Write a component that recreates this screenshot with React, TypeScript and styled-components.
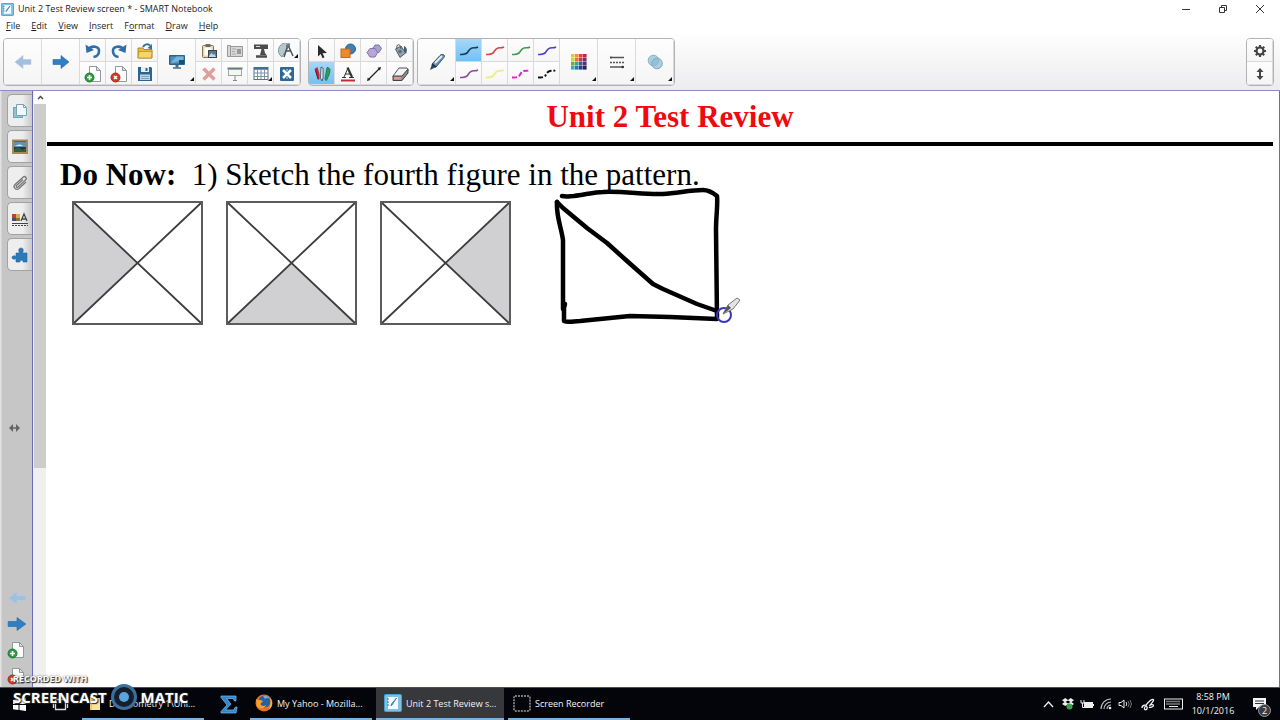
import React from "react";
import styled, { createGlobalStyle } from "styled-components";

const GlobalStyle = createGlobalStyle`
  * { box-sizing: border-box; }
  body {
    margin: 0;
    background: #fff;
    font-family: "Open Sans", "Noto Sans", sans-serif;
    font-size: 9px;
    color: #222;
  }
  button {
    font: inherit;
    color: inherit;
    padding: 0;
    margin: 0;
    border: 0;
    background: none;
  }
  svg { display: block; flex: none; }
`;

const Screen = styled.div`
  display: flex;
  flex-direction: column;
  height: 100vh;
  overflow: hidden;
  position: relative;
`;

/* ---------- Title bar and menu ---------- */

const TitleBar = styled.header`
  display: flex;
  align-items: center;
  height: 18px;
  padding-left: 1px;
  gap: 4px;
`;

const WindowTitle = styled.h1`
  flex: 1;
  margin: 0;
  font-size: 9px;
  line-height: 18px;
  font-weight: 400;
  white-space: nowrap;
`;

const WindowButton = styled.button`
  display: flex;
  align-items: center;
  justify-content: center;
  width: 37px;
  height: 16px;
`;

const WindowButtons = styled.div`
  display: flex;
  padding-right: 2px;
`;

const MenuBar = styled.nav`
  display: flex;
  gap: 11px;
  height: 16px;
  padding-left: 6px;
`;

const MenuButton = styled.button`
  line-height: 16px;
`;

/* ---------- Toolbar ---------- */

const Toolbar = styled.div`
  display: flex;
  align-items: flex-start;
  height: 57px;
  padding: 4px 6px 0 3px;
  background: linear-gradient(#fefefe, #ececee);
  border-bottom: 1px solid #8f8bc6;
`;

const ToolGroup = styled.div<{ $gap?: number }>`
  display: grid;
  grid-auto-flow: column;
  grid-template-rows: 23px 23px;
  height: 48px;
  margin-right: ${(p) => p.$gap ?? 0}px;
  border: 1px solid #b2b2b4;
  border-radius: 4px;
  overflow: hidden;
  background: #fafafb;
`;

const Spacer = styled.div`
  flex: 1;
`;

const ToolButton = styled.button<{ $big?: boolean; $active?: boolean }>`
  display: flex;
  align-items: center;
  justify-content: center;
  position: relative;
  width: ${(p) => (p.$big ? 38 : 26)}px;
  grid-row: ${(p) => (p.$big ? "span 2" : "auto")};
  background: ${(p) =>
    p.$active ? "linear-gradient(#a5d8f9, #6fc0f2)" : "linear-gradient(#fdfdfd, #f5f5f6)"};
  box-shadow: inset -1px -1px 0 #dadadc;
`;

const Corner = styled.span`
  position: absolute;
  right: 2px;
  bottom: 4px;
  border-left: 4px solid transparent;
  border-bottom: 4px solid #111;
`;

/* ---------- Work area ---------- */

const Main = styled.div`
  display: flex;
  flex: 1;
  min-height: 0;
`;

const Sidebar = styled.aside`
  display: flex;
  flex-direction: column;
  width: 33px;
  padding: 3px 0 0 7px;
  background: linear-gradient(90deg, #e2e2e2 1px, #c6c6c6 2px);
  border-right: 1px solid #6f6ab8;
`;

const TabList = styled.div`
  display: flex;
  flex-direction: column;
  gap: 3px;
`;

const SideTab = styled.button`
  display: flex;
  align-items: center;
  justify-content: center;
  height: 33px;
  width: 25px;
  border: 1px solid #a2a2a2;
  border-right: 0;
  border-radius: 5px 0 0 5px;
  background: linear-gradient(90deg, #eeeeee 60%, #c9c9c9);
`;

const SideMiddle = styled.div`
  flex: 1;
  display: flex;
  align-items: center;
  padding: 0 0 4px 1px;
`;

const SideActions = styled.div`
  display: flex;
  flex-direction: column;
  gap: 8px;
  height: 98px;
  overflow: hidden;
`;

const SideButton = styled.button`
  height: 18px;
  width: 20px;
  flex: none;
`;

const ScrollBar = styled.div`
  display: flex;
  flex-direction: column;
  width: 13px;
  padding-left: 1px;
  background: #f0f0f1;
`;

const ScrollUp = styled.button`
  display: flex;
  align-items: center;
  justify-content: center;
  height: 13px;
  background: #fff;
`;

const ScrollThumb = styled.div`
  height: 61%;
  background: #cdcdcd;
`;

const Canvas = styled.main`
  flex: 1;
  background: #fff;
  border-right: 1px solid #6f6ab8;
  font-family: "Liberation Serif", serif;
  color: #000;
`;

const PageHeading = styled.h2`
  margin: 0 6px 0 1px;
  padding: 8px 0 7px 20px;
  border-bottom: 4px solid #000;
  font-size: 31px;
  line-height: 36px;
  font-weight: 700;
  text-align: center;
  color: #f00a10;
`;

const Prompt = styled.p`
  margin: 0;
  padding: 11px 0 0 14px;
  font-size: 31px;
  line-height: 36px;
  white-space: pre-wrap;
`;

const Figures = styled.div`
  display: flex;
  gap: 23px;
  padding: 8px 0 0 26px;
`;

const SketchArea = styled.svg`
  margin-left: 21px;
  overflow: visible;
`;

/* ---------- Taskbar ---------- */

const Taskbar = styled.footer`
  display: flex;
  align-items: stretch;
  height: 33px;
  padding-right: 2px;
  background: #04050a;
  border-top: 1px solid #4e4a7c;
  color: #f2f2f2;
`;

const TaskIconButton = styled.button<{ $width: number }>`
  display: flex;
  align-items: center;
  justify-content: center;
  width: ${(p) => p.$width}px;
`;

const Task = styled.button<{ $active?: boolean; $width: number }>`
  display: flex;
  align-items: center;
  gap: 4px;
  width: ${(p) => p.$width}px;
  margin-right: 4px;
  padding-left: ${(p) => (p.$active ? 8 : 5)}px;
  background: ${(p) => (p.$active ? "#36383c" : "none")};
  border-bottom: 2px solid #76b3e4;
  white-space: nowrap;
`;

const Tray = styled.div`
  display: flex;
  align-items: center;
  margin-left: auto;
`;

const TrayButton = styled.button<{ $width: number }>`
  display: flex;
  align-items: center;
  justify-content: center;
  width: ${(p) => p.$width}px;
  height: 32px;
`;

const Clock = styled.time`
  width: 54px;
  text-align: center;
  line-height: 14px;
`;

const Notifications = styled.button`
  position: relative;
  display: flex;
  align-items: center;
  width: 38px;
  height: 32px;
  padding-left: 13px;
`;

const Badge = styled.span`
  position: absolute;
  left: 18px;
  top: 16px;
  width: 13px;
  height: 13px;
  border-radius: 50%;
  border: 1px solid #999;
  background: #3b3b3f;
  line-height: 11px;
  text-align: center;
`;

const Watermark = styled.div`
  position: absolute;
  left: 13px;
  bottom: 9px;
  color: #fff;
  font-weight: 700;
  text-shadow: 1px 1px 1px #222, 0 0 2px #555;
  pointer-events: none;
`;

const WatermarkSmall = styled.div`
  font-size: 9px;
  line-height: 9px;
`;

const WatermarkLarge = styled.div`
  display: flex;
  align-items: center;
  gap: 3px;
  font-size: 15px;
  line-height: 28px;
`;

/* ---------- Icons ---------- */

type IconProps = { w?: number; h?: number; children: React.ReactNode };

const Icon = ({ w = 16, h = 16, children }: IconProps) => (
  <svg width={w} height={h} viewBox={`0 0 ${w} ${h}`} fill="none" aria-hidden="true">
    {children}
  </svg>
);

const NotebookIcon = ({ size = 13 }: { size?: number }) => (
  <svg width={size} height={size} viewBox="0 0 18 18" aria-hidden="true">
    <rect width="18" height="18" rx="2" fill="#4c9fd0" />
    <rect x="1" y="1" width="16" height="16" rx="1" fill="#7fc0e4" />
    <rect x="4" y="3" width="10" height="12" fill="#f6fbfe" />
    <path d="M3 5h2M3 8h2M3 11h2" stroke="#2d7ba9" />
    <path d="M12.500 4L8 11l-1 1 .5-2z" fill="#3d86b2" stroke="#3d86b2" />
  </svg>
);

const ArrowIcon = ({ left, pale, w = 18 }: { left?: boolean; pale?: boolean; w?: number }) => (
  <svg width={w} height="16" viewBox="0 0 18 16" preserveAspectRatio="none" aria-hidden="true">
    <path
      d={left ? "M1 8l8-6.500v4h8v5h-8v4z" : "M17 8L9 1.500v4H1v5h8v4z"}
      fill={pale ? "#a3bfde" : "#2f7fc4"}
      stroke={pale ? "#b5cae2" : "#266aa8"}
      strokeWidth="0.600"
    />
  </svg>
);

const UndoIcon = ({ flip }: { flip?: boolean }) => (
  <Icon>
    <g transform={flip ? "translate(16 0) scale(-1 1)" : undefined}>
      <path d="M3.500 6.500C6.500 2 14.500 3 14 8.500c-.2 3-2.500 5-5.500 5.500" stroke="#2f6fa9" strokeWidth="2.600" />
      <path d="M.5 1.500l1 8.500L9 7z" fill="#2f6fa9" />
    </g>
  </Icon>
);

const PageIcon = ({ remove }: { remove?: boolean }) => (
  <Icon w={18} h={18}>
    <path d="M5.500 1.500h7l4 4v11h-11z" fill="#fdfdfd" stroke="#8f999c" />
    <path d="M12.500 1.500v4h4z" fill="#dde3e5" stroke="#8f999c" />
    <circle cx="5.500" cy="12.500" r="4.500" fill={remove ? "#cf3a2a" : "#2f9a45"} stroke={remove ? "#a82c20" : "#1f7a33"} />
    <path d={remove ? "M4 11l3 3M7 11l-3 3" : "M5.500 10v5M3 12.500h5"} stroke="#fff" strokeWidth="1.600" />
  </Icon>
);

const FolderIcon = () => (
  <Icon>
    <path d="M1 5h5l1 1.500h8V15H1z" fill="#e7bc45" stroke="#b38a25" />
    <path d="M1 15l1-6.500h13L14.500 15z" fill="#f5d56d" stroke="#b38a25" strokeWidth="0.700" />
    <path d="M6 4c1.500-3 5-3.500 7-1.500" stroke="#2f6fa9" strokeWidth="2" />
    <path d="M15 1v5.500L10.500 5z" fill="#2f6fa9" />
  </Icon>
);

const SaveIcon = () => (
  <Icon>
    <path d="M1 1h13l1 1v13H1z" fill="#2d6590" />
    <rect x="4" y="1" width="8" height="5" fill="#e9f0f5" />
    <rect x="8.500" y="2" width="2" height="3" fill="#2d6590" />
    <rect x="3" y="8.500" width="10" height="5.500" fill="#bcd5e6" />
    <path d="M4 10.500h8M4 12.500h8" stroke="#7aa3c0" />
  </Icon>
);

const MonitorIcon = () => (
  <Icon w={18} h={16}>
    <rect x="1" y="1" width="16" height="10" rx="1" fill="#2b648e" />
    <rect x="2.500" y="2.500" width="13" height="7" fill="#4d94c4" />
    <path d="M2.500 9.500l6-7h7v3z" fill="#79b5da" />
    <path d="M7.500 11h3v2.500h-3z" fill="#476b83" />
    <path d="M5 14h8" stroke="#476b83" strokeWidth="1.500" />
    <rect x="11" y="6" width="5" height="4" fill="#244d69" />
  </Icon>
);

const PasteIcon = () => (
  <Icon>
    <rect x="1.500" y="2.500" width="11" height="12" rx="1" fill="#e6d6b2" stroke="#8c7549" />
    <rect x="3.500" y="4.500" width="7" height="8" fill="#fff" />
    <path d="M4.500 1h5v3h-5z" fill="#6c6c6c" />
    <rect x="7.500" y="7.500" width="8" height="7" fill="#4e7c99" stroke="#39444b" />
    <path d="M8 13l2.500-3 2 2 1-1 1.500 3H8z" fill="#c9d7d9" />
  </Icon>
);

const ShadeIcon = () => (
  <Icon>
    <path d="M.5 2.500h3v11h-3zM3.500 3.500h12v10h-12z" fill="#d7d7d7" stroke="#999" />
    <path d="M5 6h4M5 8.500h3M5 11h4" stroke="#aaa" />
    <rect x="10" y="6" width="4" height="5" fill="#999" />
  </Icon>
);

const CameraIcon = () => (
  <Icon>
    <path d="M1 1.500h14V6h-4l1 4 1.500 2H7l1.500-6H1z" fill="#4b4b4b" />
    <path d="M3 13.500h11" stroke="#4b4b4b" strokeWidth="2.500" />
    <path d="M3 3.500h4" stroke="#ddd" />
  </Icon>
);

const MeasureIcon = () => (
  <Icon w={18}>
    <path d="M12 1A7.500 7.500 0 0 0 4 14z" fill="#b8c7cf" stroke="#8496a0" />
    <path d="M10 2L6 14M10 2l5 11M8 8h5" stroke="#4a5358" strokeWidth="1.500" />
    <circle cx="10" cy="3" r="2" fill="#66747c" />
  </Icon>
);

const DeleteIcon = () => (
  <Icon>
    <path d="M2.500 2.500l11 11M13.500 2.500l-11 11" stroke="#dfa09c" strokeWidth="3.500" />
  </Icon>
);

const ScreenIcon = () => (
  <Icon>
    <path d="M.5 2.500h15" stroke="#667d88" strokeWidth="2" />
    <rect x="1.500" y="3.500" width="13" height="6" fill="#f4f6ef" stroke="#9ba7a9" />
    <path d="M8 10v4M6 14.500h4" stroke="#888" />
  </Icon>
);

const TableIcon = () => (
  <Icon>
    <rect x="1" y="1.500" width="14" height="12" fill="#fff" stroke="#577386" />
    <path d="M1 2.500h14" stroke="#3c6f94" strokeWidth="2.500" />
    <path d="M1 7h14M1 10.500h14M4.500 3v10M8 3v10M11.500 3v10" stroke="#7893a4" />
  </Icon>
);

const AddOnIcon = () => (
  <Icon>
    <rect x="1" y="1" width="14" height="14" rx="1" fill="#2c6797" />
    <path d="M4 4l8 8M12 4l-8 8" stroke="#fff" strokeWidth="2.500" />
    <circle cx="8" cy="4" r="1" fill="#8bc1e6" />
    <circle cx="8" cy="12" r="1" fill="#8bc1e6" />
  </Icon>
);

const PointerIcon = () => (
  <Icon>
    <path d="M4 2l9 8-4.500.3 2 4-2 1-1.800-4.300L4 13.500z" fill="#2c2c2c" />
  </Icon>
);

const ShapesIcon = () => (
  <Icon>
    <circle cx="10.500" cy="6" r="5" fill="#3f7fb4" stroke="#2b618e" />
    <rect x="1" y="6" width="9" height="8.500" fill="#ee8a2c" stroke="#c4681a" />
  </Icon>
);

const PolygonIcon = () => (
  <Icon>
    <path d="M9 2h4l2.500 3.500L13 9.500H9L6.500 5.500z" fill="#a5a3cf" stroke="#7977a9" />
    <path d="M4 5.500h5l2.500 4L9 14H4L1 9.500z" fill="#b8a7d6" stroke="#8570ac" />
  </Icon>
);

const FillIcon = () => (
  <Icon>
    <path d="M3.500 6L9 3l4.500 7L8 14.500z" fill="#9aa1a6" stroke="#555d62" />
    <path d="M5 6c-1.500-5 3.500-6.500 4 0" stroke="#555" />
    <path d="M12 3c3 1 3.500 4.500 2 8l-2-3z" fill="#3c5f7a" />
    <circle cx="8" cy="8.500" r="1.800" fill="#3b76a3" />
  </Icon>
);

const PensIcon = () => (
  <Icon w={18}>
    <path d="M1.500 3l3-2 2 7v5l-1.500 1z" fill="#c4273d" />
    <path d="M2.500 4l2.500 9" stroke="#5e2430" />
    <path d="M8 1l2 1v10l-1 3-1.500-3z" fill="#eef4f7" stroke="#345" strokeWidth="0.800" />
    <path d="M14 1.500c3 .5 3.500 2 2.500 6l-3 7-1.500-1z" fill="#2e9e5b" stroke="#1d6a3c" strokeWidth="0.800" />
  </Icon>
);

const TextIcon = () => (
  <Icon>
    <path d="M4 11L8 2" stroke="#333" />
    <path d="M7.500 1.500L12 11" stroke="#333" strokeWidth="2.200" />
    <path d="M5 8h6M2 11.500h4M9 11.500h5" stroke="#333" strokeWidth="1.200" />
    <path d="M1 14.500h14" stroke="#c52c3b" strokeWidth="2" />
  </Icon>
);

const LineIcon = () => (
  <Icon>
    <path d="M3 13L13 3" stroke="#222" strokeWidth="1.300" />
    <path d="M1 15l.8-3.500L4.500 14zM15 1l-3.500.8L14 4.500z" fill="#222" />
  </Icon>
);

const EraserIcon = () => (
  <Icon w={18}>
    <path d="M2 10l6-8h8l1 2-6 9H3z" fill="#f3f3f3" stroke="#555" />
    <path d="M2 10h9l6-7v4l-6 7.500H2z" fill="#8a8a8a" stroke="#444" />
    <rect x="3" y="11" width="7" height="2.500" fill="#dc9a9a" />
  </Icon>
);

const MarkerIcon = () => (
  <Icon w={18} h={20}>
    <path d="M2 18l2-6 4 3z" fill="#26486a" />
    <path d="M4 12L12 3.500c1-1.500 4-1.500 4.500.5 0 1-1 2-1.500 2.500L8 15z" fill="#7192ae" stroke="#30506c" />
    <path d="M7 11l7-7" stroke="#e6eef4" strokeWidth="1.800" />
    <path d="M4 12l4 3" stroke="#172c43" strokeWidth="1.500" />
  </Icon>
);

const StrokeIcon = ({ color, width = 1.5, dash }: { color: string; width?: number; dash?: string }) => (
  <Icon w={20} h={12}>
    <path
      d="M1 9.500c3-.3 6 .3 7.500-2S10.500 3.500 13 3s4 .2 6-1"
      stroke={color}
      strokeWidth={width}
      strokeDasharray={dash}
    />
  </Icon>
);

const swatches = [
  ["#e8c92f", "#f2922c", "#df4438", "#b62a3d"],
  ["#c8d63a", "#e8713a", "#b33a75", "#7d2e74"],
  ["#5cb548", "#3aa3a0", "#5e4aa0", "#43357e"],
  ["#38a9c9", "#2c78b5", "#27408a", "#26264f"],
];

const PaletteIcon = () => (
  <Icon>
    {swatches.map((row, y) =>
      row.map((c, x) => <rect key={`${x}${y}`} x={x * 4} y={y * 4} width="3.600" height="3.600" fill={c} />)
    )}
  </Icon>
);

const LineStyleIcon = () => (
  <Icon>
    <path d="M1 3.500h14" stroke="#555" strokeWidth="1.300" />
    <path d="M1 8.500h14" stroke="#555" strokeWidth="1.500" strokeDasharray="2 1" />
    <path d="M1 13h14" stroke="#555" strokeWidth="1.300" />
    <path d="M2 2.500v2M13 12l2 1-2 1z" stroke="#333" />
  </Icon>
);

const TransparencyIcon = () => (
  <Icon>
    <circle cx="6.500" cy="6.500" r="5.300" fill="#a9cfe0" stroke="#84b0c6" />
    <circle cx="10" cy="9.500" r="5.300" fill="#8dbbd3" fillOpacity="0.700" stroke="#7fa9bf" />
  </Icon>
);

const GearIcon = () => (
  <Icon w={12} h={12}>
    <circle cx="6" cy="6" r="3.500" stroke="#444" strokeWidth="2.200" />
    <path d="M6 0v2M6 10v2M0 6h2M10 6h2M1.800 1.800l1.400 1.400M8.800 8.800l1.400 1.400M1.800 10.200l1.400-1.400M8.800 3.200l1.400-1.400" stroke="#444" strokeWidth="2.200" />
  </Icon>
);

const UpDownIcon = () => (
  <Icon w={12} h={12}>
    <path d="M6 0l3.500 4h-7zM6 12l3.500-4h-7z" fill="#444" />
    <path d="M6 3v6" stroke="#444" strokeWidth="2" />
  </Icon>
);

const PagesTabIcon = () => (
  <Icon>
    <rect x="1.500" y="4.500" width="9" height="10" fill="#8dc3dc" stroke="#6da4bd" />
    <path d="M4.500 1.500h7l3 3v8h-10z" fill="#f1f8fb" stroke="#7ba2b4" />
    <path d="M11.500 1.500v3h3" stroke="#7ba2b4" />
  </Icon>
);

const GalleryTabIcon = () => (
  <Icon>
    <rect x="1" y="1.500" width="14" height="12.500" fill="#243746" stroke="#a58a58" strokeWidth="2" />
    <path d="M2 3h12v5H2z" fill="#5c93bc" />
    <path d="M2 11c3-4 5-3 7-1s3 0 5-1v4H2z" fill="#2d5f46" />
    <path d="M3 7c3-2 6-2 8 0z" fill="#d7e6ec" />
  </Icon>
);

const ClipTabIcon = () => (
  <Icon>
    <path
      d="M11 4.500L4.500 10.500c-1 1 .5 2.500 1.500 1.500l7.500-7c2-2-.5-4.500-2.500-2.800L3 9.500c-2.500 2.500 1 6.500 4 4L14 7"
      stroke="#777"
      strokeWidth="1.300"
    />
  </Icon>
);

const PropertiesTabIcon = () => (
  <Icon>
    <rect x="0" y="3" width="4" height="4" fill="#b5443c" />
    <rect x="4" y="3" width="4" height="4" fill="#d5b13c" />
    <rect x="0" y="7" width="4" height="3" fill="#4a4a78" />
    <rect x="4" y="7" width="4" height="3" fill="#7d7742" />
    <path d="M9 10l3-7 3 7M10 8h4" stroke="#444" strokeWidth="1.300" />
    <path d="M0 12.500h16" stroke="#444" />
    <path d="M0 14.500h16" stroke="#444" strokeDasharray="2 1" />
  </Icon>
);

const PuzzleTabIcon = () => (
  <Icon w={18}>
    <path
      d="M5 6h3.500C7 2.500 8 1 10 1s3 1.500 1.500 5H16v9h-4c.5-2.500-3.500-2.500-3 0H5v-3.500c-2 1.500-4 .5-4-1s2-2.500 4-1z"
      fill="#2f79b7"
      stroke="#23629a"
      strokeWidth="0.600"
    />
  </Icon>
);

const SigmaIcon = () => (
  <Icon w={18} h={19}>
    <path d="M1 1h15v5h-1.500L13 3.500H6.500L11 9l-5.500 6H13.500L15.500 12H17l-1 6H1v-1.500L7 10 1 2.500z" fill="#2f86cf" stroke="#7fc0ee" strokeWidth="0.700" />
  </Icon>
);

const FirefoxIcon = () => (
  <Icon w={18} h={18}>
    <circle cx="9" cy="9" r="8.500" fill="#e8702a" />
    <circle cx="9.500" cy="7.500" r="6" fill="#2b5f9e" />
    <path d="M8 2c3-1 6 0 7 3-2-1.500-4-1-5 0z" fill="#6fb0dc" />
    <path d="M1 5c1 1 2 1 4 1 1 0 2 1 3 1-1 2-2.500 1.500-2.500 3s3 3 5.500 1c-1 4-7 4.500-9 1z" fill="#f3a32b" />
    <path d="M15 4c3 4 2.500 9-1.500 12C16 12 16 8 15 4z" fill="#f7c93c" />
  </Icon>
);

const RecorderIcon = () => (
  <Icon w={18} h={17}>
    <rect x="1" y="1" width="16" height="15" rx="1" stroke="#e8e8e8" strokeDasharray="2 1" />
  </Icon>
);

/* ---------- Pattern figures ---------- */

const triangles = {
  left: "1,1 65,62 1,123",
  bottom: "1,123 65,62 130,123",
  right: "130,1 65,62 130,123",
};

const PatternFigure = ({ shaded }: { shaded: keyof typeof triangles }) => (
  <svg width="131" height="124" viewBox="0 0 131 124" role="img" aria-label={`Square with ${shaded} quarter shaded`}>
    <polygon points={triangles[shaded]} fill="#d0d0d3" />
    <path d="M1 1L130 123M130 1L1 123" stroke="#3d3d3d" strokeWidth="1.800" />
    <rect x="1" y="1" width="129" height="122" fill="none" stroke="#5c5c5c" strokeWidth="2" />
  </svg>
);

const HandSketch = () => (
  <SketchArea width="190" height="124" viewBox="0 0 190 124" fill="none" role="img" aria-label="Hand drawn square with one diagonal">
    <g stroke="#000" strokeWidth="4.500" strokeLinecap="round" strokeLinejoin="round">
      <path d="M7-5c5 1 8 0 12 0 10-1 20-4 29-4 22-1 42 3 60 2 15-1 28-4 40-4 5 0 9 2 14 6 1 8-1 20-1 34l1 88" />
      <path d="M2 1c-1 14 4 24 6 38v69" />
      <path d="M2 1l6 6 24 20 20 15 20 18 26 23 10 5 34 15 20 7" />
      <path d="M10 103l-1 4 0 13c4 2 10 0 16 0l50-5 40 1 47 2" />
    </g>
    <circle cx="169" cy="114" r="7" stroke="#3b34bd" strokeWidth="2" />
    <path d="M168 113l5-9 9-7 3 2-7 9z" fill="#e2e5e3" stroke="#777" />
    <path d="M168 113l5-9 3 3z" fill="#555" />
  </SketchArea>
);

/* ---------- Data ---------- */

const menus: [string, string, string][] = [
  ["", "F", "ile"],
  ["", "E", "dit"],
  ["", "V", "iew"],
  ["", "I", "nsert"],
  ["F", "o", "rmat"],
  ["", "D", "raw"],
  ["", "H", "elp"],
];

type Tool = { label: string; icon: React.ReactNode; big?: boolean; more?: boolean; active?: boolean };

const pageTools: Tool[] = [
  { label: "Previous page", icon: <ArrowIcon left pale />, big: true },
  { label: "Next page", icon: <ArrowIcon />, big: true },
  { label: "Undo", icon: <UndoIcon /> },
  { label: "Add page", icon: <PageIcon /> },
  { label: "Redo", icon: <UndoIcon flip /> },
  { label: "Delete page", icon: <PageIcon remove /> },
  { label: "Open", icon: <FolderIcon /> },
  { label: "Save", icon: <SaveIcon /> },
  { label: "View screens", icon: <MonitorIcon />, big: true, more: true },
  { label: "Paste", icon: <PasteIcon /> },
  { label: "Delete", icon: <DeleteIcon /> },
  { label: "Screen shade", icon: <ShadeIcon /> },
  { label: "Presentation", icon: <ScreenIcon /> },
  { label: "Document camera", icon: <CameraIcon /> },
  { label: "Table", icon: <TableIcon />, more: true },
  { label: "Measurement tools", icon: <MeasureIcon />, more: true },
  { label: "Add-ons", icon: <AddOnIcon /> },
];

const drawTools: Tool[] = [
  { label: "Select", icon: <PointerIcon /> },
  { label: "Pens", icon: <PensIcon />, active: true },
  { label: "Shapes", icon: <ShapesIcon /> },
  { label: "Text", icon: <TextIcon /> },
  { label: "Regular polygons", icon: <PolygonIcon /> },
  { label: "Lines", icon: <LineIcon /> },
  { label: "Fill", icon: <FillIcon /> },
  { label: "Eraser", icon: <EraserIcon /> },
];

const penTools: Tool[] = [
  { label: "Pen types", icon: <MarkerIcon />, big: true, more: true },
  { label: "Black pen", icon: <StrokeIcon color="#173b57" />, active: true },
  { label: "Purple pen", icon: <StrokeIcon color="#8d4a96" /> },
  { label: "Red pen", icon: <StrokeIcon color="#d8423f" /> },
  { label: "Yellow highlighter", icon: <StrokeIcon color="#eeee88" width={2} /> },
  { label: "Green pen", icon: <StrokeIcon color="#3f9a4b" /> },
  { label: "Magenta dashed pen", icon: <StrokeIcon color="#e222c4" width={2} dash="5 2" /> },
  { label: "Blue pen", icon: <StrokeIcon color="#4b3fc4" /> },
  { label: "Black dashed pen", icon: <StrokeIcon color="#111" width={2} dash="5 2 2 2" /> },
  { label: "Color", icon: <PaletteIcon />, big: true, more: true },
  { label: "Line style", icon: <LineStyleIcon />, big: true, more: true },
  { label: "Transparency", icon: <TransparencyIcon />, big: true, more: true },
];

const viewTools: Tool[] = [
  { label: "Customize toolbar", icon: <GearIcon /> },
  { label: "Move toolbar", icon: <UpDownIcon /> },
];

const Tools = ({ items, gap }: { items: Tool[]; gap?: number }) => (
  <ToolGroup $gap={gap}>
    {items.map((t) => (
      <ToolButton key={t.label} aria-label={t.label} $big={t.big} $active={t.active}>
        {t.icon}
        {t.more && <Corner />}
      </ToolButton>
    ))}
  </ToolGroup>
);

const sideTabs = [
  { label: "Page sorter", icon: <PagesTabIcon /> },
  { label: "Gallery", icon: <GalleryTabIcon /> },
  { label: "Attachments", icon: <ClipTabIcon /> },
  { label: "Properties", icon: <PropertiesTabIcon /> },
  { label: "Add-ons", icon: <PuzzleTabIcon /> },
];

export default function App() {
  return (
    <Screen>
      <GlobalStyle />
      <TitleBar>
        <NotebookIcon />
        <WindowTitle>Unit 2 Test Review screen * - SMART Notebook</WindowTitle>
        <WindowButtons>
          <WindowButton aria-label="Minimize">
            <Icon w={10} h={10}><path d="M1 5.500h8" stroke="#333" /></Icon>
          </WindowButton>
          <WindowButton aria-label="Restore">
            <Icon w={10} h={10}><path d="M1.500 3.500h5v5h-5zM3.500 3.500v-2h5v5h-2" stroke="#333" /></Icon>
          </WindowButton>
          <WindowButton aria-label="Close">
            <Icon w={10} h={10}><path d="M1 1l8 8M9 1L1 9" stroke="#333" /></Icon>
          </WindowButton>
        </WindowButtons>
      </TitleBar>
      <MenuBar>
        {menus.map(([a, key, b]) => (
          <MenuButton key={a + key + b}>{a}<u>{key}</u>{b}</MenuButton>
        ))}
      </MenuBar>
      <Toolbar>
        <Tools items={pageTools} gap={7} />
        <Tools items={drawTools} gap={3} />
        <Tools items={penTools} />
        <Spacer />
        <Tools items={viewTools} />
      </Toolbar>
      <Main>
        <Sidebar>
          <TabList>
            {sideTabs.map((t) => (
              <SideTab key={t.label} aria-label={t.label}>{t.icon}</SideTab>
            ))}
          </TabList>
          <SideMiddle>
            <Icon w={13} h={10}>
              <path d="M1 5l4-4v8zM12 5L8 1v8z" fill="#666" />
              <path d="M3 5h7" stroke="#666" strokeWidth="1.500" />
            </Icon>
          </SideMiddle>
          <SideActions>
            <SideButton aria-label="Previous page"><ArrowIcon left pale w={20} /></SideButton>
            <SideButton aria-label="Next page"><ArrowIcon w={20} /></SideButton>
            <SideButton aria-label="Add page"><PageIcon /></SideButton>
            <SideButton aria-label="Delete page"><PageIcon remove /></SideButton>
          </SideActions>
        </Sidebar>
        <ScrollBar>
          <ScrollUp aria-label="Scroll up">
            <Icon w={7} h={5}><path d="M1 4l2.500-2.500L6 4" stroke="#444" strokeWidth="1.400" /></Icon>
          </ScrollUp>
          <ScrollThumb />
        </ScrollBar>
        <Canvas>
          <PageHeading>Unit 2 Test Review</PageHeading>
          <Prompt><b>Do Now:</b>{"  1) Sketch the fourth figure in the pattern."}</Prompt>
          <Figures>
            <PatternFigure shaded="left" />
            <PatternFigure shaded="bottom" />
            <PatternFigure shaded="right" />
            <HandSketch />
          </Figures>
        </Canvas>
      </Main>
      <Taskbar>
        <TaskIconButton $width={38} aria-label="Start">
          <Icon w={13} h={13}><path d="M0 2l5.500-.8V6H0zM6.500 1L13 0v6H6.500zM0 7h5.500v5L0 11.200zM6.500 7H13v6l-6.500-1z" fill="#fff" /></Icon>
        </TaskIconButton>
        <TaskIconButton $width={44} aria-label="Task view">
          <Icon w={17} h={13}><path d="M3.500 1.500h10v10h-10zM1.500 3v7M15.500 3v7" stroke="#ddd" strokeWidth="1.300" /></Icon>
        </TaskIconButton>
        <Task $width={122}>
          <Icon w={18} h={17}><path d="M3 1h5l1 2h4v12H3z" fill="#efcb61" /><path d="M5 6h8v9H5z" fill="#f9e29a" /></Icon>
          D:\Geometry 1\Uni...
        </Task>
        <TaskIconButton $width={42} aria-label="Sigma"><SigmaIcon /></TaskIconButton>
        <Task $width={122}><FirefoxIcon />My Yahoo - Mozilla...</Task>
        <Task $width={128} $active><NotebookIcon size={18} />Unit 2 Test Review s...</Task>
        <Task $width={122}><RecorderIcon />Screen Recorder</Task>
        <Tray>
          <TrayButton $width={20} aria-label="Show hidden icons">
            <Icon w={11} h={8}><path d="M1 7l4.500-5L10 7" stroke="#eee" strokeWidth="1.300" /></Icon>
          </TrayButton>
          <TrayButton $width={19} aria-label="Dropbox">
            <Icon w={12} h={12}>
              <path d="M3.300 0L6 2 8.700 0 12 2.300 9.500 4 12 6 8.700 8 6 6.200 3.300 8 0 6l2.500-2L0 2.300z" fill="#eee" />
              <path d="M6 2.500L8.500 4 6 5.600 3.500 4z" fill="#04050a" />
              <circle cx="7.500" cy="8.500" r="3" fill="#3fa14e" />
            </Icon>
          </TrayButton>
          <TrayButton $width={20} aria-label="Battery">
            <Icon w={14} h={10}>
              <rect x="4" y="3" width="9" height="6" fill="#eee" />
              <path d="M1 1v3h3V1M2.500 4v4.500H5M13.500 5v2" stroke="#eee" />
            </Icon>
          </TrayButton>
          <TrayButton $width={18} aria-label="Network">
            <Icon w={12} h={12}>
              <path d="M1 11A10 10 0 0 1 11 1M4 11a7 7 0 0 1 7-7M7 11a4 4 0 0 1 4-4" stroke="#bbb" strokeWidth="1.200" />
              <circle cx="10" cy="10" r="1.300" fill="#eee" />
            </Icon>
          </TrayButton>
          <TrayButton $width={20} aria-label="Volume">
            <Icon w={14} h={12}>
              <path d="M1 4.500h2L6 2v8L3 7.500H1z" stroke="#eee" />
              <path d="M8 4q1.500 2 0 4" stroke="#ddd" /><path d="M10 3q2.500 3 0 6M12 2q3 4 0 8" stroke="#777" />
            </Icon>
          </TrayButton>
          <TrayButton $width={25} aria-label="Ink workspace">
            <Icon w={14} h={13}>
              <path d="M1 10c0-3 4-4 5-1s-3 4-2.500 1S10 1 12 1.500s-2 4-3.500 6.500c1-1.500 4-2 4-.5S9 10 8 9" stroke="#eee" strokeWidth="1.300" />
            </Icon>
          </TrayButton>
          <TrayButton $width={26} aria-label="Touch keyboard">
            <Icon w={19} h={12}>
              <rect x="0.500" y="1" width="18" height="10" stroke="#eee" />
              <path d="M2.500 3.500h14M2.500 6h14" stroke="#eee" strokeDasharray="1 1" strokeWidth="1.300" />
              <path d="M5 8.500h9" stroke="#eee" />
            </Icon>
          </TrayButton>
          <Clock>8:58 PM<br />10/1/2016</Clock>
          <Notifications aria-label="Notifications">
            <Icon w={13} h={13}><path d="M0 0h13v9H6l-3 3V9H0z" fill="#f4f4f4" /><path d="M2 3h9M2 5.500h9" stroke="#333" /></Icon>
            <Badge>2</Badge>
          </Notifications>
        </Tray>
      </Taskbar>
      <Watermark>
        <WatermarkSmall>RECORDED WITH</WatermarkSmall>
        <WatermarkLarge>
          SCREENCAST
          <Icon w={28} h={28}>
            <circle cx="14" cy="14" r="11.500" fill="#16202d" stroke="#3a6f9f" strokeWidth="3" />
            <circle cx="14" cy="14" r="5" fill="#5ba4dd" />
          </Icon>
          MATIC
        </WatermarkLarge>
      </Watermark>
    </Screen>
  );
}
